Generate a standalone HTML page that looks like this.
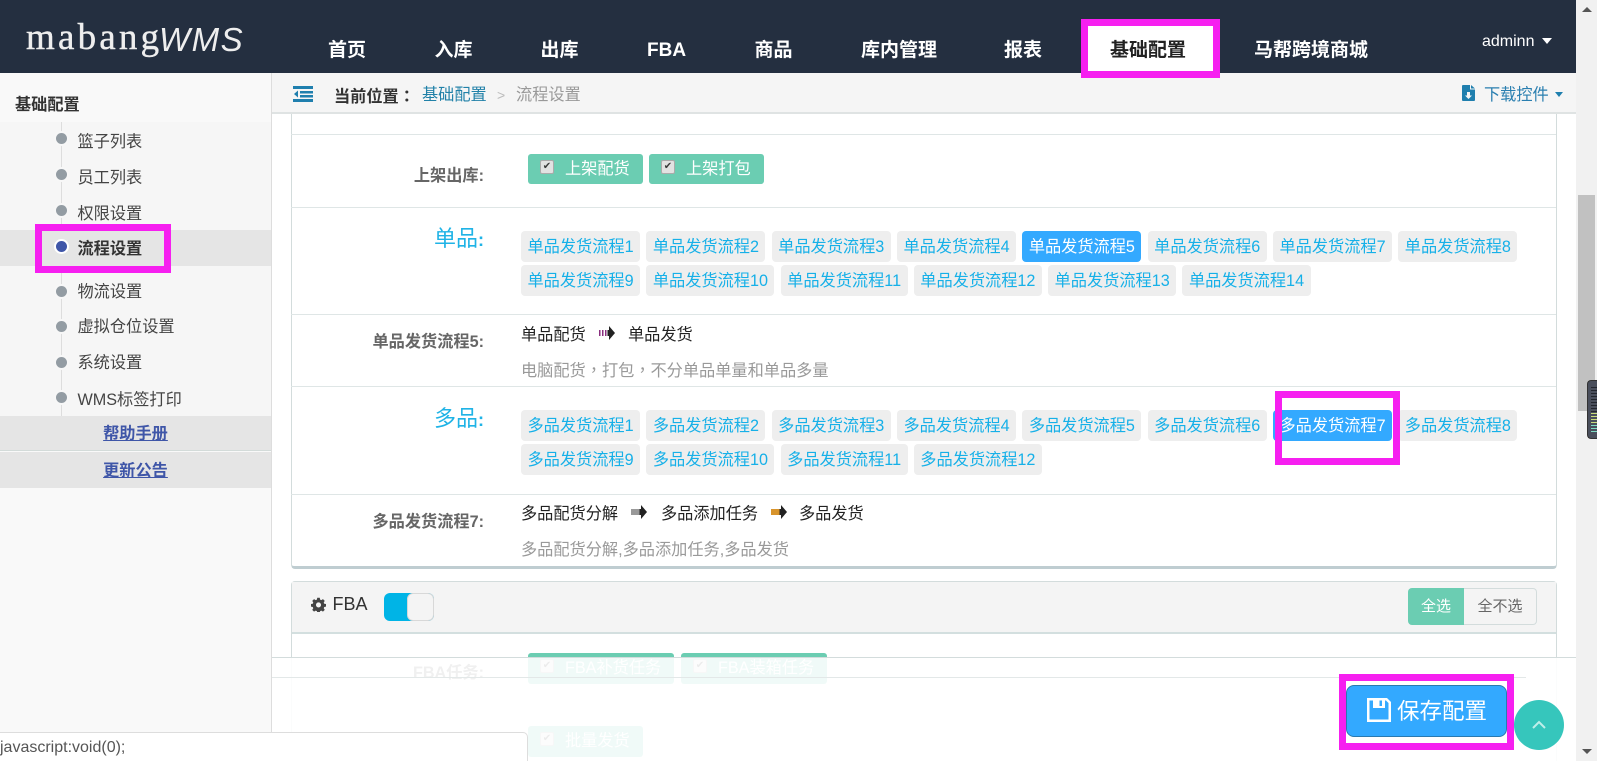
<!DOCTYPE html>
<html lang="zh-CN"><head><meta charset="utf-8"><title>流程设置</title>
<style>
*{box-sizing:border-box}
html,body{margin:0;padding:0;width:1597px;height:761px;overflow:hidden;background:#fff}
body{position:relative;font-family:"Liberation Sans","Noto Sans CJK SC",sans-serif;font-size:16.2px;color:#333}
.a{position:absolute;white-space:nowrap}
.t{position:absolute;white-space:nowrap;height:24px;line-height:24px}
.nav{top:39px;font-size:19px;font-weight:700;color:#fff}
.side{left:77.500px;color:#444}
.dot{position:absolute;left:56px;width:11px;height:11px;border-radius:50%;background:#939ca3;box-shadow:0 0 0 2px #f7f7f7}
.line{position:absolute;left:291px;width:1265px;height:1px;background:#dfe6e6}
.lab{position:absolute;right:1113px;white-space:nowrap;font-weight:700;color:#666;height:24px;line-height:24px}
.big{font-weight:400;font-size:22px;color:#1fb3e6}
.big b{font-size:18px}
.row{position:absolute;left:521px;display:flex;gap:6.200px}
.row span{display:block;height:31px;line-height:32px;padding:0 6.500px;background:#eee;border-radius:4px;color:#16b0e8;white-space:nowrap}
.row span.on{background:#33a9ff;color:#fff}
.g{position:absolute;height:31px;line-height:30px;background:#6bcdb2;color:#fff;border-radius:3px;white-space:nowrap;padding-left:37px}
.g i{position:absolute;left:12px;top:6px;width:14px;height:14px;background:#e2e2e2;border:1px solid #aaa;border-radius:2px;color:#3c3c3c;font:700 10px/12px "DejaVu Sans",sans-serif;font-style:normal;text-align:center}
.pink{position:absolute;border:7px solid #f61ff0}
.tc{font-family:"Noto Sans CJK TC",sans-serif}
svg{position:absolute;display:block}
</style></head><body>

<div class="a" style="left:0;top:0;width:1576px;height:73px;background:#242f40"></div>
<div class="a" style="left:26px;top:15px;font:37px/46px 'Liberation Serif',serif;color:#eee;letter-spacing:3.200px;-webkit-text-stroke:.4px #eee">mabang</div>
<div class="a" style="left:159px;top:19px;font:italic 33px/42px 'Liberation Sans',sans-serif;color:#eee;letter-spacing:1.500px">WMS</div>

<div class="t nav" style="left:328px">首页</div>
<div class="t nav" style="left:434.500px">入库</div>
<div class="t nav" style="left:540.500px">出库</div>
<div class="t nav" style="left:647px">FBA</div>
<div class="t nav" style="left:754.500px">商品</div>
<div class="t nav" style="left:861px">库内管理</div>
<div class="t nav" style="left:1004px">报表</div>
<div class="a" style="left:1081px;top:22px;width:139px;height:51px;background:#fff;border-radius:4px 4px 0 0"></div>
<div class="t nav" style="left:1110px;color:#222">基础配置</div>
<div class="t nav" style="left:1254px">马帮跨境商城</div>
<div class="t" style="left:1482px;top:30px;font-size:16px;color:#fff">adminn</div>
<div class="a" style="left:1542px;top:38px;border:5px solid transparent;border-top:6px solid #fff;border-bottom:0"></div>

<div class="a" style="left:0;top:73px;width:272px;height:688px;background:#f9f9f9;border-right:1px solid #ddd"></div>
<div class="a" style="left:0;top:122px;width:271px;height:294px;background:#f6f6f6"></div>
<div class="a" style="left:61px;top:122px;width:1px;height:294px;background:#ddd"></div>
<div class="t" style="left:15px;top:92.500px;font-weight:700;color:#333">基础配置</div>
<div class="a" style="left:0;top:230px;width:271px;height:36px;background:#e5e5e5"></div>
<div class="dot" style="top:133px"></div><div class="t side" style="top:130px">篮子列表</div>
<div class="dot" style="top:169px"></div><div class="t side" style="top:166px">员工列表</div>
<div class="dot" style="top:205px"></div><div class="t side" style="top:201.500px">权限设置</div>
<div class="dot" style="top:241px;background:#3f56a8;box-shadow:0 0 0 2px #fff"></div><div class="t side" style="top:237px;font-weight:700;color:#333">流程设置</div>
<div class="dot" style="top:286px"></div><div class="t side" style="top:280px">物流设置</div>
<div class="dot" style="top:321px"></div><div class="t side" style="top:315px">虚拟仓位设置</div>
<div class="dot" style="top:357px"></div><div class="t side" style="top:351px">系统设置</div>
<div class="dot" style="top:392px"></div><div class="t side" style="top:387.500px">WMS标签打印</div>
<div class="a" style="left:0;top:416px;width:271px;height:35px;background:#e5e5e5;border-bottom:1px solid #d3dbd9;text-align:center;line-height:37px;font-weight:700;color:#3f56a8;text-decoration:underline">帮助手册</div>
<div class="a" style="left:0;top:452px;width:271px;height:36px;background:#e5e5e5;text-align:center;line-height:38px;font-weight:700;color:#3f56a8;text-decoration:underline">更新公告</div>
<div class="pink" style="left:35px;top:224px;width:136px;height:49px"></div>

<div class="a" style="left:272px;top:73px;width:1304px;height:41px;background:#f5f5f5;border-bottom:2px solid #dfe3e3"></div>
<svg style="left:293px;top:86px" width="20" height="16" viewBox="0 0 20 16"><path fill="#1f7fae" d="M0 0h20v3H0zM7 5h13v2.500H7zM7 9h13v2.500H7zM0 13h20v3H0zM5 4.500v7L1 8z"/></svg>
<div class="t" style="left:334px;top:82.500px;font-weight:700">当前位置<span class="tc" lang="zh-TW">：</span></div>
<div class="t" style="left:422px;top:82.500px;color:#2181a8">基础配置</div>
<div class="t" style="left:497px;top:82.500px;color:#bbb;font-size:14px">&gt;</div>
<div class="t" style="left:516px;top:82.500px;color:#999">流程设置</div>
<svg style="left:1462px;top:85px" width="13" height="16" viewBox="0 0 13 16"><path fill="#1f7fae" d="M0 1Q0 0 1 0h7v4.500h5V15q0 1-1 1H1q-1 0-1-1zM9 0l4 3.500H9zM5 7v3.500H3l3.500 3.500L10 10.500H8V7z" fill-rule="evenodd"/></svg>
<div class="t" style="left:1484px;top:83px;color:#2a7fb0">下载控件</div>
<div class="a" style="left:1555px;top:92px;border:4px solid transparent;border-top:5px solid #1f7fae;border-bottom:0"></div>

<div class="a" style="left:291px;top:114px;width:1266px;height:455px;border:1px solid #d3dcdc;border-top:0;border-bottom:3px solid #bfcdd1;border-radius:0 0 4px 4px"></div>
<div class="line" style="top:134px"></div>
<div class="line" style="top:207px"></div>
<div class="line" style="top:314px"></div>
<div class="line" style="top:386px"></div>
<div class="line" style="top:494px"></div>

<div class="lab" style="top:164px">上架出库:</div>
<div class="g" style="left:528px;top:154px;width:115px;height:30px">上架配货<i>✔</i></div>
<div class="g" style="left:649px;top:154px;width:115px;height:30px">上架打包<i>✔</i></div>

<div class="lab big" style="top:225px;height:28px;line-height:28px">单品<b>:</b></div>
<div class="row" style="top:231px"><span>单品发货流程1</span><span>单品发货流程2</span><span>单品发货流程3</span><span>单品发货流程4</span><span class="on">单品发货流程5</span><span>单品发货流程6</span><span>单品发货流程7</span><span>单品发货流程8</span></div>
<div class="row" style="top:265px"><span>单品发货流程9</span><span>单品发货流程10</span><span>单品发货流程11</span><span>单品发货流程12</span><span>单品发货流程13</span><span>单品发货流程14</span></div>

<div class="lab" style="top:329.500px">单品发货流程5:</div>
<div class="t" style="left:521px;top:322.500px;color:#222">单品配货</div>
<svg style="left:599px;top:326px" width="16" height="14" viewBox="0 0 16 14"><path fill="#8a2f7f" d="M0 4h1.500v6H0zM3 4h1.500v6H3zM6 4h1.500v6H6z"/><path fill="#222" d="M8.500 4H10V0l6 7-6 7v-4H8.500z"/></svg>
<div class="t" style="left:628px;top:322.500px;color:#222">单品发货</div>
<div class="t" style="left:521px;top:356.500px;color:#999">电脑配货<span class="tc" lang="zh-TW">，</span>打包<span class="tc" lang="zh-TW">，</span>不分单品单量和单品多量</div>

<div class="lab big" style="top:405px;height:28px;line-height:28px">多品<b>:</b></div>
<div class="row" style="top:410px"><span>多品发货流程1</span><span>多品发货流程2</span><span>多品发货流程3</span><span>多品发货流程4</span><span>多品发货流程5</span><span>多品发货流程6</span><span class="on">多品发货流程7</span><span>多品发货流程8</span></div>
<div class="row" style="top:444px"><span>多品发货流程9</span><span>多品发货流程10</span><span>多品发货流程11</span><span>多品发货流程12</span></div>

<div class="lab" style="top:509.500px">多品发货流程7:</div>
<div class="t" style="left:521px;top:501.500px;color:#222">多品配货分解</div>
<svg style="left:631px;top:505px" width="16" height="14" viewBox="0 0 16 14"><path fill="#999" d="M0 4h8.500v6H0z"/><path fill="#222" d="M8.500 4H10V0l6 7-6 7v-4H8.500z"/></svg>
<div class="t" style="left:661px;top:501.500px;color:#222">多品添加任务</div>
<svg style="left:771px;top:505px" width="16" height="14" viewBox="0 0 16 14"><path fill="#d8942c" d="M0 4h8.500v6H0z"/><path fill="#222" d="M8.500 4H10V0l6 7-6 7v-4H8.500z"/></svg>
<div class="t" style="left:799px;top:501.500px;color:#222">多品发货</div>
<div class="t" style="left:521px;top:537.500px;color:#999">多品配货分解,多品添加任务,多品发货</div>

<div class="a" style="left:291px;top:581px;width:1266px;height:180px;border:1px solid #d3dcdc;border-bottom:0;border-radius:4px 4px 0 0"></div>
<div class="a" style="left:292px;top:582px;width:1264px;height:52px;background:#f4f4f4;border-bottom:2px solid #d3dfdf"></div>
<svg style="left:311px;top:597px" width="15" height="15" viewBox="0 0 16 16"><path fill="#444" fill-rule="evenodd" d="M6.500 0h3l.4 2.200 1.500.6L13.300 1.600l2.100 2.100-1.200 1.900.6 1.500 2.200.4v3l-2.200.4-.6 1.500 1.200 1.900-2.100 2.100-1.900-1.200-1.500.6-.4 2.200h-3l-.4-2.200-1.500-.6-1.900 1.200L.6 14.300l1.200-1.900-.6-1.500L-1 10.500v-3l2.200-.4.600-1.500L.6 3.700 2.700 1.600l1.900 1.200 1.500-.6zM8 5.500a3 3 0 1 0 0 6 3 3 0 0 0 0-6z" transform="translate(.8 .8) scale(.9)"/></svg>
<div class="t" style="left:332.500px;top:592px;font-size:18px;color:#333">FBA</div>
<div class="a" style="left:384px;top:593px;width:50px;height:28px;background:#00b4e6;border-radius:6px"></div>
<div class="a" style="left:407px;top:593px;width:27px;height:28px;background:#f4f4f4;border:1px solid #d8d8d8;border-radius:6px"></div>
<div class="a" style="left:1408px;top:588px;width:56px;height:37px;background:#6bcdb2;color:#fff;border-radius:4px 0 0 4px;text-align:center;line-height:37px;font-size:15px">全选</div>
<div class="a" style="left:1464px;top:588px;width:73px;height:37px;border:1px solid #d3dcdc;border-left:0;border-radius:0 4px 4px 0;text-align:center;line-height:35px;font-size:15px;color:#666">全不选</div>

<div class="lab" style="top:661px;">FBA任务:</div>
<div class="g" style="left:528px;top:653px;width:146px">FBA补货任务<i>✔</i></div>
<div class="g" style="left:681px;top:653px;width:146px">FBA装箱任务<i>✔</i></div>
<div class="g" style="left:528px;top:726px;width:115px">批量发货<i>✔</i></div>

<div class="a" style="left:272px;top:657px;width:1304px;height:104px;background:rgba(255,255,255,.9);border-top:1px solid #d3dcdc"></div>
<div class="a" style="left:272px;top:677px;width:1254px;height:1px;background:#e3e8e8"></div>

<div class="a" style="left:1346px;top:685px;width:161px;height:52px;background:#33a9ff;border:1px solid #2a7ab0;border-radius:8px"></div>
<svg style="left:1367px;top:698px" width="24" height="24" viewBox="0 0 24 24"><path fill="#fff" fill-rule="evenodd" d="M0 0h20l4 4v20H0zM2.500 2.500v19h19V5l-2.500-2.500h-1V10H6V2.500zM12.500 2.500V8H15V2.500z"/></svg>
<div class="t" style="left:1397px;top:697px;height:30px;line-height:30px;font-size:22.500px;color:#fff">保存配置</div>
<div class="pink" style="left:1339px;top:674px;width:175px;height:76px"></div>
<div class="a" style="left:1514px;top:700px;width:50px;height:50px;border-radius:50%;background:#36c6bc"></div>
<svg style="left:1532px;top:720px" width="14" height="9" viewBox="0 0 14 9"><path fill="none" stroke="#bfeee9" stroke-width="2" d="M1 8l6-6 6 6"/></svg>

<div class="pink" style="left:1081px;top:19px;width:139px;height:59px"></div>
<div class="pink" style="left:1275px;top:391px;width:125px;height:74px"></div>

<div class="a" style="left:0;top:732px;width:528px;height:29px;background:#fff;border:1px solid #ddd;border-left:0;border-bottom:0;border-radius:0 5px 0 0"></div>
<div class="t" style="left:0;top:736px;font-size:16px;color:#555">javascript:void(0);</div>

<div class="a" style="left:1576px;top:0;width:21px;height:761px;background:#f1f1f1"></div>
<div class="a" style="left:1582px;top:7px;border:5px solid transparent;border-bottom:5px solid #555;border-top:0"></div>
<div class="a" style="left:1578px;top:195px;width:17px;height:216px;background:#c1c1c1"></div>
<div class="a" style="left:1582px;top:749px;border:5px solid transparent;border-top:5px solid #555;border-bottom:0"></div>
<div class="a" style="left:1587px;top:380px;width:10px;height:59px;background:#4a4f5c;border:1px solid #333;border-right:0;border-radius:4px 0 0 4px"></div>
<div class="a" style="left:1591px;top:387px;width:6px;height:26px;background:repeating-linear-gradient(#23262e 0 1px,#4a4f5c 1px 3px)"></div>
<div class="a" style="left:1591px;top:413px;width:6px;height:12px;background:repeating-linear-gradient(#c9dc7c 0 1px,#4a4f5c 1px 3px)"></div>
<div class="a" style="left:1591px;top:425px;width:6px;height:8px;background:repeating-linear-gradient(#7fdcc4 0 1px,#4a4f5c 1px 3px)"></div>
</body></html>
